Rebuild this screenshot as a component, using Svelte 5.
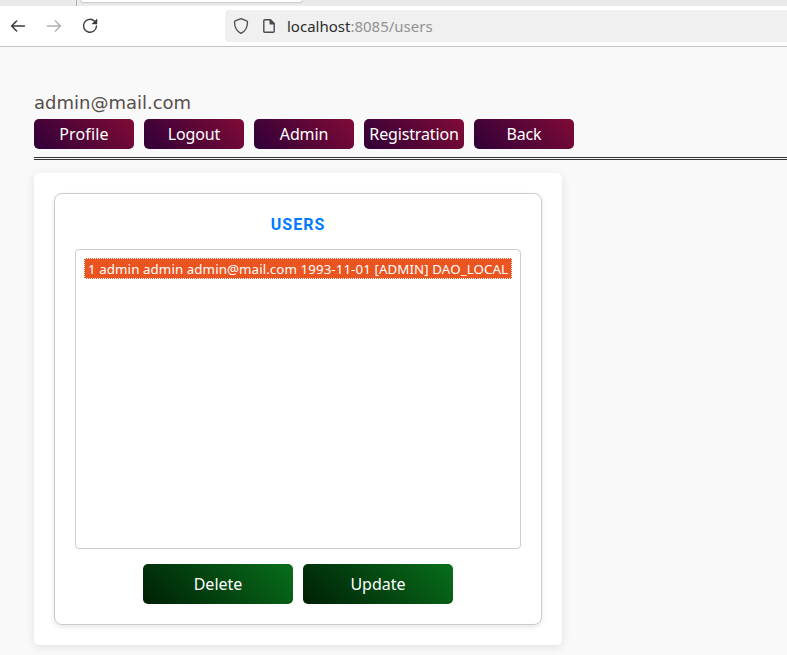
<script>
  const links = ['Profile', 'Logout', 'Admin', 'Registration', 'Back'];
  const actions = ['Delete', 'Update'];
  const users = ['1 admin admin admin@mail.com 1993-11-01 [ADMIN] DAO_LOCAL'];
</script>

<div class="window">
  <div class="tabs">
    <div class="idle"></div>
    <div class="current"></div>
  </div>
  <div class="toolbar">
    <div class="controls">
      <svg width="16" height="16" viewBox="0 0 16 16" fill="none" stroke="#3a3a3b" stroke-width="1.5" stroke-linecap="round" stroke-linejoin="round"><path d="M14.4 8H1.8M6.6 3L1.6 8L6.6 13" /></svg>
      <svg width="16" height="16" viewBox="0 0 16 16" fill="none" stroke="#b0b0b1" stroke-width="1.5" stroke-linecap="round" stroke-linejoin="round"><path d="M1.4 8H14.2M9.4 3L14.4 8L9.4 13" /></svg>
      <svg width="16" height="16" viewBox="0 0 16 16"><path d="M12.6 3.2A6.5 6.5 0 1 0 14.5 8" fill="none" stroke="#3a3a3b" stroke-width="1.4" stroke-linecap="round" /><path d="M15 1V6H10z" fill="#3a3a3b" stroke="#3a3a3b" stroke-width=".5" stroke-linejoin="round" /></svg>
    </div>
    <div class="address">
      <svg class="shield" width="16" height="18" viewBox="0 0 16 18" fill="none" stroke="#4b4b4c" stroke-width="1.3" stroke-linejoin="round"><path d="M8 1.7L13.7 3.8Q14.6 4.1 14.5 5.2C14.4 10.4 12.3 14.3 8 16.3C3.7 14.3 1.6 10.4 1.5 5.2Q1.4 4.1 2.3 3.8Z" /></svg>
      <svg class="page" width="12" height="14" viewBox="0 0 12 14" fill="none" stroke="#4b4b4c" stroke-width="1.4" stroke-linejoin="round"><path d="M2 .8H7.4L11.2 4.6V12.2Q11.2 13.2 10.2 13.2H1.8Q.8 13.2 .8 12.2V1.8Q.8 .8 2 .8Z" /><path d="M7.2 1V4.8H11Z" fill="#4b4b4c" /></svg>
      <div class="url"><b>localhost</b>:8085/users</div>
    </div>
  </div>
  <main>
    <header>
      <div class="email">admin@mail.com</div>
      <nav>
        {#each links as link}
          <button class={link.toLowerCase()}>{link}</button>
        {/each}
      </nav>
    </header>
    <section class="panel">
      <div class="card">
        <h1>USERS</h1>
        <div class="list">
          {#each users as user}
            <div class="option">{user}</div>
          {/each}
        </div>
        <div class="actions">
          {#each actions as action}
            <button>{action}</button>
          {/each}
        </div>
      </div>
    </section>
  </main>
</div>

<style>
  :global(body) { margin: 0; background: #f9f9f9; }
  .window {
    height: 655px;
    overflow: hidden;
    background: #f9f9f9;
    font-family: "Noto Sans", "Open Sans", sans-serif;
  }
  .tabs { display: flex; height: 6px; background: #eaeaea; overflow: hidden; }
  .idle { width: 76px; border-right: 1px solid #b0b0b0; }
  .current {
    width: 221px;
    height: 2px;
    margin-left: 4px;
    background: #fff;
    border-radius: 0 0 4px 4px;
    box-shadow: 0 0 2px #777;
  }
  .toolbar {
    display: flex;
    align-items: center;
    box-sizing: border-box;
    height: 41px;
    border-bottom: 1px solid #c6c6c7;
    background: #fff;
  }
  .controls { display: flex; gap: 20px; width: 215px; padding-left: 10px; }
  .address {
    display: flex;
    align-items: center;
    flex: 1;
    height: 32px;
    border-radius: 4px 0 0 4px;
    background: #f0f0f0;
  }
  .shield { margin-left: 8px; }
  .page { margin-left: 14px; }
  .url {
    margin-left: 12px;
    color: #929292;
    font-size: 15px;
    line-height: 32px;
    white-space: nowrap;
  }
  .url b { color: #2c2c2d; font-weight: 400; }
  main { padding: 44px 0 0 34px; }
  header { height: 66px; border-bottom: 3px double #333; }
  .email {
    height: 28px;
    color: #554f49;
    font: 18px/24px "DejaVu Sans", sans-serif;
  }
  nav { display: flex; gap: 10px; }
  button {
    border: 0;
    padding: 0;
    border-radius: 5px;
    color: #fff;
    font: 16px/30px "Noto Sans", "Open Sans", sans-serif;
    white-space: nowrap;
  }
  nav button {
    width: 100px;
    height: 30px;
    background: linear-gradient(45deg, #300038, #800b36);
    letter-spacing: -0.15px;
  }
  nav .profile { letter-spacing: 0.15px; }
  .panel {
    box-sizing: border-box;
    width: 528px;
    height: 472px;
    margin-top: 13px;
    padding: 20px;
    border-radius: 5px;
    background: #fff;
    box-shadow: 0 2px 10px rgba(0, 0, 0, .1);
  }
  .card {
    box-sizing: border-box;
    height: 432px;
    padding: 20px;
    border: 1px solid #ccc;
    border-radius: 8px;
    background: #fff;
    box-shadow: 0 2px 5px rgba(0, 0, 0, .1);
  }
  h1 {
    margin: 0;
    height: 35px;
    color: #007bff;
    font: 700 16px/22px Roboto, sans-serif;
    letter-spacing: 1px;
    text-align: center;
  }
  .list {
    box-sizing: border-box;
    height: 300px;
    padding: 8px;
    border: 1px solid #ccc;
    border-radius: 4px;
  }
  .option {
    box-sizing: border-box;
    height: 21px;
    padding-left: 3px;
    border: 1px dotted #fff;
    background: #e95420;
    color: #fff;
    font-size: 13.33px;
    line-height: 20px;
    letter-spacing: 0.08px;
    white-space: nowrap;
  }
  .actions { display: flex; justify-content: center; gap: 10px; margin-top: 15px; }
  .actions button {
    width: 150px;
    height: 40px;
    background: linear-gradient(45deg, #002006, #086e1b);
    line-height: 40px;
  }
</style>
